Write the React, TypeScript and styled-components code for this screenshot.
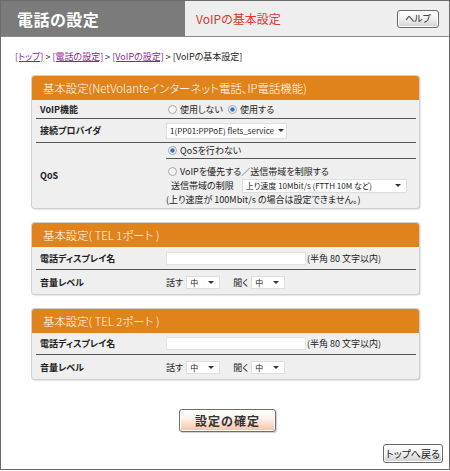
import React from "react";
import styled, { createGlobalStyle } from "styled-components";

const Global = createGlobalStyle`
  html, body { margin: 0; padding: 0; background: #fff; }
  body {
    font-family: "Noto Sans CJK JP", "Noto Sans", sans-serif;
    font-feature-settings: "palt";
    color: #222;
  }
`;

const Frame = styled.div`
  width: 450px;
  height: 470px;
  box-sizing: border-box;
  border: 1px solid #6b6b6b;
  display: flex;
  flex-direction: column;
`;

const Header = styled.div`
  display: flex;
  height: 35px;
  border-bottom: 1px solid #8a8a8a;
`;

const HeaderTitle = styled.div`
  width: 184px;
  box-sizing: border-box;
  padding-left: 16px;
  background: #7b7b7b;
  color: #fff;
  font-weight: bold;
  font-size: 16px;
  letter-spacing: 0.5px;
  display: flex;
  align-items: center;
`;

const HeaderSub = styled.div`
  flex: 1;
  background: #eeeeee;
  display: flex;
  align-items: center;
  justify-content: space-between;
  padding: 0 10px 0 11px;
  color: #e2352b;
  font-size: 12px;
`;

const SmallButton = styled.button<{ $w: number; $h: number; $fs: number }>`
  width: ${(p) => p.$w}px;
  height: ${(p) => p.$h}px;
  padding: 0;
  border: 1px solid #6a6a6a;
  border-radius: 3px;
  background: linear-gradient(#ffffff, #f2f2f2 45%, #d0d0d0);
  box-shadow: inset 0 0 0 1px #fff;
  font-family: inherit;
  font-feature-settings: "palt";
  font-size: ${(p) => p.$fs}px;
  color: #222;
  display: flex;
  align-items: center;
  justify-content: center;
`;

const Breadcrumb = styled.div`
  padding: 14px 14px 13px;
  font-size: 9px;
  line-height: 12px;
  color: #222;
`;

const Crumb = styled.a`
  color: #8b2a8b;
  text-decoration: underline;
`;

const Content = styled.div`
  padding: 0 30px 0 31px;
  display: flex;
  flex-direction: column;
  gap: 15px;
`;

const Card = styled.section`
  background: #efefef;
  border-radius: 3px;
  box-shadow: 0 0 0 1px #cfcfcf, 1px 1px 2px rgba(0, 0, 0, 0.35);
`;

const CardHead = styled.div`
  height: 24px;
  background: #e0831a;
  border-radius: 3px 3px 0 0;
  color: #fff;
  font-size: 11.4px;
  font-weight: 300;
  padding-left: 11px;
  display: flex;
  align-items: center;
  white-space: nowrap;
`;

const Row = styled.div<{ $h: number }>`
  display: grid;
  grid-template-columns: 130px 1fr;
  align-items: center;
  min-height: ${(p) => p.$h}px;
  margin: 0 3px 0 4px;
  border-bottom: 1px solid #555;
  &:last-child {
    border-bottom: none;
  }
`;

const Label = styled.div`
  padding-left: 4px;
  font-size: 9px;
  font-weight: bold;
`;

const Value = styled.div`
  font-size: 9px;
  display: flex;
  align-items: center;
  white-space: nowrap;
`;

const ValueStack = styled.div`
  font-size: 9px;
  display: flex;
  flex-direction: column;
  align-self: stretch;
  white-space: nowrap;
`;

const SubRow = styled.div<{ $h: number; $line?: boolean; $indent?: number }>`
  height: ${(p) => p.$h}px;
  display: flex;
  align-items: center;
  padding-left: ${(p) => p.$indent ?? 0}px;
  border-bottom: ${(p) => (p.$line ? "1px solid #555" : "none")};
`;

const Choice = styled.span`
  display: inline-flex;
  align-items: center;
  margin-right: 3px;
  padding-left: 2px;
`;

const Radio = styled.span<{ $on?: boolean }>`
  width: 7px;
  height: 7px;
  border-radius: 50%;
  border: 1px solid #a8a8a8;
  margin-right: 3px;
  background: ${(p) =>
    p.$on
      ? "radial-gradient(circle, #2f6fb8 0, #3b7cc4 35%, #cfe0f2 50%, #fff 70%)"
      : "linear-gradient(#f4f4f4, #fff)"};
`;

const Select = styled.div<{ $w: number; $h: number }>`
  width: ${(p) => p.$w}px;
  height: ${(p) => p.$h}px;
  box-sizing: border-box;
  background: #fff;
  border: 1px solid #dedede;
  display: flex;
  align-items: center;
  justify-content: space-between;
  gap: 4px;
  padding: 0 5px 0 3px;
  font-size: 8px;
  white-space: nowrap;
  overflow: hidden;
`;

const Arrow = styled.span`
  flex: none;
  width: 0;
  height: 0;
  border-left: 3px solid transparent;
  border-right: 3px solid transparent;
  border-top: 3px solid #333;
`;

const TextInput = styled.div`
  width: 140px;
  height: 13px;
  box-sizing: border-box;
  background: #fff;
  border: 1px solid #e2e2e2;
  margin-right: 1px;
`;

const Gap = styled.span<{ $w: number }>`
  display: inline-block;
  width: ${(p) => p.$w}px;
`;

const SubmitWrap = styled.div`
  display: flex;
  justify-content: center;
  margin-top: 30px;
  padding-left: 5px;
`;

const SubmitButton = styled.button`
  width: 97px;
  height: 23px;
  padding: 0;
  border: 1px solid #6f6f6f;
  border-radius: 3px;
  background: linear-gradient(#ffffff, #fdf2ea 40%, #f3c3a3);
  box-shadow: inset 0 0 0 1px #fff, 1px 1px 1px rgba(0, 0, 0, 0.2);
  font-family: inherit;
  font-size: 12px;
  font-weight: bold;
  letter-spacing: 1px;
  color: #333;
`;

const BackWrap = styled.div`
  display: flex;
  justify-content: flex-end;
  margin-top: 12px;
  padding-right: 6px;
`;

function Sel({ w, h, text }: { w: number; h: number; text: string }) {
  return (
    <Select $w={w} $h={h}>
      <span>{text}</span>
      <Arrow />
    </Select>
  );
}

function TelCard({ n }: { n: number }) {
  return (
    <Card>
      <CardHead>基本設定( TEL {n}ポート )</CardHead>
      <Row $h={n === 1 ? 22 : 21}>
        <Label>電話ディスプレイ名</Label>
        <Value>
          <TextInput />
          (半角 80 文字以内)
        </Value>
      </Row>
      <Row $h={24}>
        <Label>音量レベル</Label>
        <Value>
          話す
          <Gap $w={3} />
          <Sel w={34} h={13} text="中" />
          <Gap $w={13} />
          聞く
          <Gap $w={3} />
          <Sel w={34} h={13} text="中" />
        </Value>
      </Row>
    </Card>
  );
}

export default function App() {
  return (
    <>
      <Global />
      <Frame>
        <Header>
          <HeaderTitle>電話の設定</HeaderTitle>
          <HeaderSub>
            VoIPの基本設定
            <SmallButton $w={42} $h={18} $fs={9}>ヘルプ</SmallButton>
          </HeaderSub>
        </Header>
        <Breadcrumb>
          <Crumb>[トップ]</Crumb> &gt; <Crumb>[電話の設定]</Crumb> &gt;{" "}
          <Crumb>[VoIPの設定]</Crumb> &gt; [VoIPの基本設定]
        </Breadcrumb>
        <Content>
          <Card>
            <CardHead>基本設定(NetVolanteインターネット電話、IP電話機能)</CardHead>
            <Row $h={18}>
              <Label>VoIP機能</Label>
              <Value>
                <Choice>
                  <Radio />
                  使用しない
                </Choice>
                <Choice>
                  <Radio $on />
                  使用する
                </Choice>
              </Value>
            </Row>
            <Row $h={23}>
              <Label>接続プロバイダ</Label>
              <Value>
                <Sel w={121} h={16} text="1(PP01:PPPoE) flets_service" />
              </Value>
            </Row>
            <Row $h={65}>
              <Label>QoS</Label>
              <ValueStack>
                <SubRow $h={15} $line>
                  <Choice>
                    <Radio $on />
                    QoSを行わない
                  </Choice>
                </SubRow>
                <SubRow $h={5} />
                <SubRow $h={14}>
                  <Choice>
                    <Radio />
                    VoIPを優先する／送信帯域を制限する
                  </Choice>
                </SubRow>
                <SubRow $h={15} $indent={5}>
                  送信帯域の制限
                  <Gap $w={8} />
                  <Sel w={165} h={14} text="上り速度 10Mbit/s (FTTH 10M など)" />
                </SubRow>
                <SubRow $h={12}>(上り速度が 100Mbit/s の場合は設定できません。)</SubRow>
              </ValueStack>
            </Row>
          </Card>
          <TelCard n={1} />
          <TelCard n={2} />
        </Content>
        <SubmitWrap>
          <SubmitButton>設定の確定</SubmitButton>
        </SubmitWrap>
        <BackWrap>
          <SmallButton $w={60} $h={19} $fs={10}>トップへ戻る</SmallButton>
        </BackWrap>
      </Frame>
    </>
  );
}
